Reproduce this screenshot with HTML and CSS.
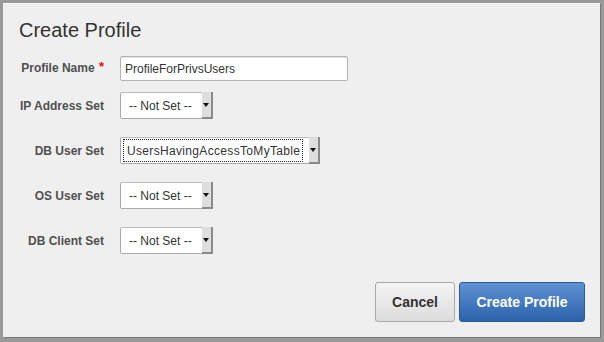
FILE: index.html
```html
<html>
<head>
    <link rel="stylesheet" href="styles.css">
</head>
<body>
    <div class="dialog">
        <h1 class="dialog__title">Create Profile</h1>
        <form class="profile-form">
            <div class="form__row">
                <label class="form__label" for="profile_name">Profile Name <span class="form__required">*</span></label>
                <input class="form__input" id="profile_name" type="text" value="ProfileForPrivsUsers">
            </div>
            <div class="form__row form__row--first-select">
                <label class="form__label">IP Address Set</label>
                <div class="select">
                    <span class="select__value">-- Not Set --</span>
                    <span class="select__arrow"></span>
                </div>
            </div>
            <div class="form__row">
                <label class="form__label">DB User Set</label>
                <div class="select">
                    <span class="select__value select__value--focus">UsersHavingAccessToMyTable</span>
                    <span class="select__arrow"></span>
                </div>
            </div>
            <div class="form__row">
                <label class="form__label">OS User Set</label>
                <div class="select">
                    <span class="select__value">-- Not Set --</span>
                    <span class="select__arrow"></span>
                </div>
            </div>
            <div class="form__row">
                <label class="form__label">DB Client Set</label>
                <div class="select">
                    <span class="select__value">-- Not Set --</span>
                    <span class="select__arrow"></span>
                </div>
            </div>
        </form>
        <div class="dialog__footer">
            <button class="button button--cancel" type="button">Cancel</button>
            <button class="button button--primary" type="submit">Create Profile</button>
        </div>
    </div>
</body>
</html>
```

FILE: styles.css
```css
html, body {
    margin: 0;
    height: 100%;
}

body {
    background: #999;
    font-family: "Liberation Sans", Arial, sans-serif;
    padding: 3px 4px 5px 3px;
    box-sizing: border-box;
}

.dialog {
    height: 100%;
    box-sizing: border-box;
    background: #efefef;
    border-top: 1px solid #f8f8f8;
    box-shadow: 1px 1px 0 #777;
    padding: 14px 15px 15px 16px;
    display: flex;
    flex-direction: column;
}

.dialog__title {
    margin: 0;
    font-size: 20px;
    line-height: 24px;
    font-weight: normal;
    color: #333;
}

.profile-form {
    margin-top: 14px;
}

.form__row {
    display: flex;
    align-items: center;
    margin-top: 18px;
}

.form__row:first-child {
    margin-top: 0;
}

.form__row--first-select {
    margin-top: 11px;
}

.form__label {
    width: 101px;
    box-sizing: border-box;
    padding-right: 16px;
    text-align: right;
    font-size: 12px;
    font-weight: bold;
    color: #505050;
    white-space: nowrap;
}

.form__required {
    color: #e00;
    font-size: 13px;
    margin-left: 1px;
    vertical-align: top;
    position: relative;
    top: -2px;
}

.form__input {
    width: 228px;
    height: 25px;
    box-sizing: border-box;
    border: 1px solid #b5b5b5;
    border-radius: 2px;
    background: #fff;
    box-shadow: inset 0 1px 1px #e2e2e2;
    padding: 0 4px;
    font-family: "Liberation Sans", Arial, sans-serif;
    font-size: 12px;
    color: #333;
}

.select {
    display: flex;
    height: 27px;
    box-sizing: border-box;
    border: 1px solid #aaa;
    border-top-color: #bbb;
    border-radius: 2px;
    background: #fff;
}

.select__value {
    display: flex;
    align-items: center;
    padding: 0 10px 0 8px;
    font-size: 12px;
    color: #333;
    white-space: nowrap;
}

.select__value--focus {
    margin: 2px 7px 2px 3px;
    padding: 0 2px 0 3px;
    letter-spacing: 0.33px;
    outline: 1px dotted #222;
}

.select__arrow {
    width: 9px;
    background: #dedede;
    border-right: 2px solid #8a8a8a;
    border-bottom: 2px solid #8a8a8a;
    margin: -1px -1px -1px 0;
    position: relative;
}

.select__arrow::after {
    content: "";
    position: absolute;
    left: 1px;
    top: 11px;
    border-left: 3px solid transparent;
    border-right: 3px solid transparent;
    border-top: 4px solid #111;
}

.dialog__footer {
    margin-top: auto;
    display: flex;
    justify-content: flex-end;
    gap: 4px;
}

.button {
    height: 40px;
    box-sizing: border-box;
    border-radius: 3px;
    font-family: "Liberation Sans", Arial, sans-serif;
    font-size: 14px;
    font-weight: bold;
    padding: 0;
    cursor: pointer;
}

.button--cancel {
    width: 80px;
    color: #333;
    border: 1px solid #a9a9a9;
    background: linear-gradient(#f4f4f4, #dcdcdc);
}

.button--primary {
    width: 126px;
    color: #fff;
    border: 1px solid #2a5a98;
    background: linear-gradient(#5d91d3, #2c63ab);
}
```
